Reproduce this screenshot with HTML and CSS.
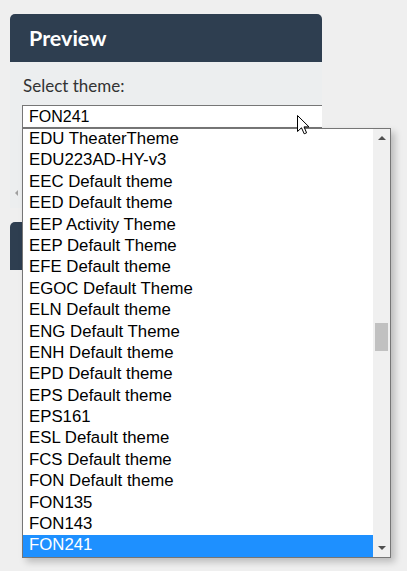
FILE: index.html
```html
<!DOCTYPE html>
<html>
<head>
<meta charset="utf-8">
<link rel="stylesheet" href="styles.css">
</head>
<body>
<div class="page">
  <section class="panel">
    <div class="panel-head">Preview</div>
    <div class="panel-body">
      <div class="label">Select theme:</div>
      <div class="select">FON241</div>
      <div class="hscroll"><span class="left-arrow"></span></div>
    </div>
  </section>
  <section class="panel second">
    <div class="panel-head"></div>
  </section>
</div>

<div class="dropdown">
  <ul class="options">
    <li>EDU TheaterTheme</li>
    <li>EDU223AD-HY-v3</li>
    <li>EEC Default theme</li>
    <li>EED Default theme</li>
    <li>EEP Activity Theme</li>
    <li>EEP Default Theme</li>
    <li>EFE Default theme</li>
    <li>EGOC Default Theme</li>
    <li>ELN Default theme</li>
    <li>ENG Default Theme</li>
    <li>ENH Default theme</li>
    <li>EPD Default theme</li>
    <li>EPS Default theme</li>
    <li>EPS161</li>
    <li>ESL Default theme</li>
    <li>FCS Default theme</li>
    <li>FON Default theme</li>
    <li>FON135</li>
    <li>FON143</li>
    <li class="selected">FON241</li>
  </ul>
  <div class="vscroll">
    <span class="arrow up"></span>
    <div class="track"><div class="thumb"></div></div>
    <span class="arrow down"></span>
  </div>
</div>

<svg class="cursor" width="13" height="20" viewBox="0 0 13 20">
  <path d="M0.5 0.5 L0.5 16.5 L4.5 12.8 L7.2 18.8 L9.6 17.8 L7 11.9 L12 11.9 Z" fill="#fff" stroke="#000" stroke-width="1" stroke-linejoin="miter"/>
</svg>
</body>
</html>
```

FILE: styles.css
```css
html, body {
  margin: 0;
  padding: 0;
}
body {
  background: #efefef;
  font-family: Lato, "Liberation Sans", sans-serif;
  width: 407px;
  height: 571px;
  overflow: hidden;
  position: relative;
}
.page {
  padding: 14px 0 0 10px;
  display: flex;
  flex-direction: column;
  gap: 14px;
}
.panel {
  width: 312px;
  border-radius: 5px 5px 0 0;
  overflow: hidden;
}
.panel-head {
  height: 48px;
  background: #2e3e50;
  color: #fff;
  font-weight: 700;
  font-size: 21.5px;
  display: flex;
  align-items: center;
  padding-left: 19px;
  box-sizing: border-box;
}
.panel-body {
  background: #eceeef;
  padding: 14px 0 0 12px;
  height: 146px;
  box-sizing: border-box;
  display: flex;
  flex-direction: column;
}
.label {
  font-size: 17px;
  color: #333;
  line-height: 20px;
  padding-left: 1px;
}
.select {
  margin-top: 9px;
  height: 23px;
  box-sizing: border-box;
  border: 1px solid #767676;
  border-right: none;
  background: #fff;
  font-family: "Liberation Sans", Arial, sans-serif;
  font-size: 16px;
  color: #000;
  padding-left: 6px;
  line-height: 21px;
}
.hscroll {
  margin-top: 60px;
  margin-left: -7px;
  height: 10px;
  display: flex;
  align-items: center;
}
.left-arrow {
  width: 0;
  height: 0;
  border-top: 3px solid transparent;
  border-bottom: 3px solid transparent;
  border-right: 3px solid #a0a0a0;
}
.dropdown {
  position: absolute;
  left: 22px;
  top: 128px;
  width: 369px;
  height: 430px;
  box-sizing: border-box;
  border: 1px solid #767676;
  background: #fff;
  box-shadow: 4px 4px 7px rgba(0, 0, 0, 0.22);
  display: flex;
}
.options {
  list-style: none;
  margin: 0;
  padding: 0;
  flex: 1;
}
.options li {
  height: 21.4px;
  box-sizing: border-box;
  line-height: 20.4px;
  padding: 0 0 1px 6px;
  font-family: "Liberation Sans", Arial, sans-serif;
  font-size: 16.8px;
  color: #000;
  white-space: nowrap;
}
.options li.selected {
  background: #1e90ff;
  color: #fff;
}
.vscroll {
  width: 17px;
  background: #f0f0f0;
  display: flex;
  flex-direction: column;
  align-items: center;
}
.arrow {
  width: 0;
  height: 0;
  border-left: 4px solid transparent;
  border-right: 4px solid transparent;
  margin: 7px 0;
}
.arrow.up {
  border-bottom: 4px solid #505050;
}
.arrow.down {
  border-top: 4px solid #505050;
}
.track {
  flex: 1;
  width: 100%;
  display: flex;
  flex-direction: column;
  align-items: center;
}
.thumb {
  margin-top: 176px;
  width: 13px;
  height: 28px;
  background: #c1c1c1;
}
.cursor {
  position: absolute;
  left: 297px;
  top: 115px;
}
```
